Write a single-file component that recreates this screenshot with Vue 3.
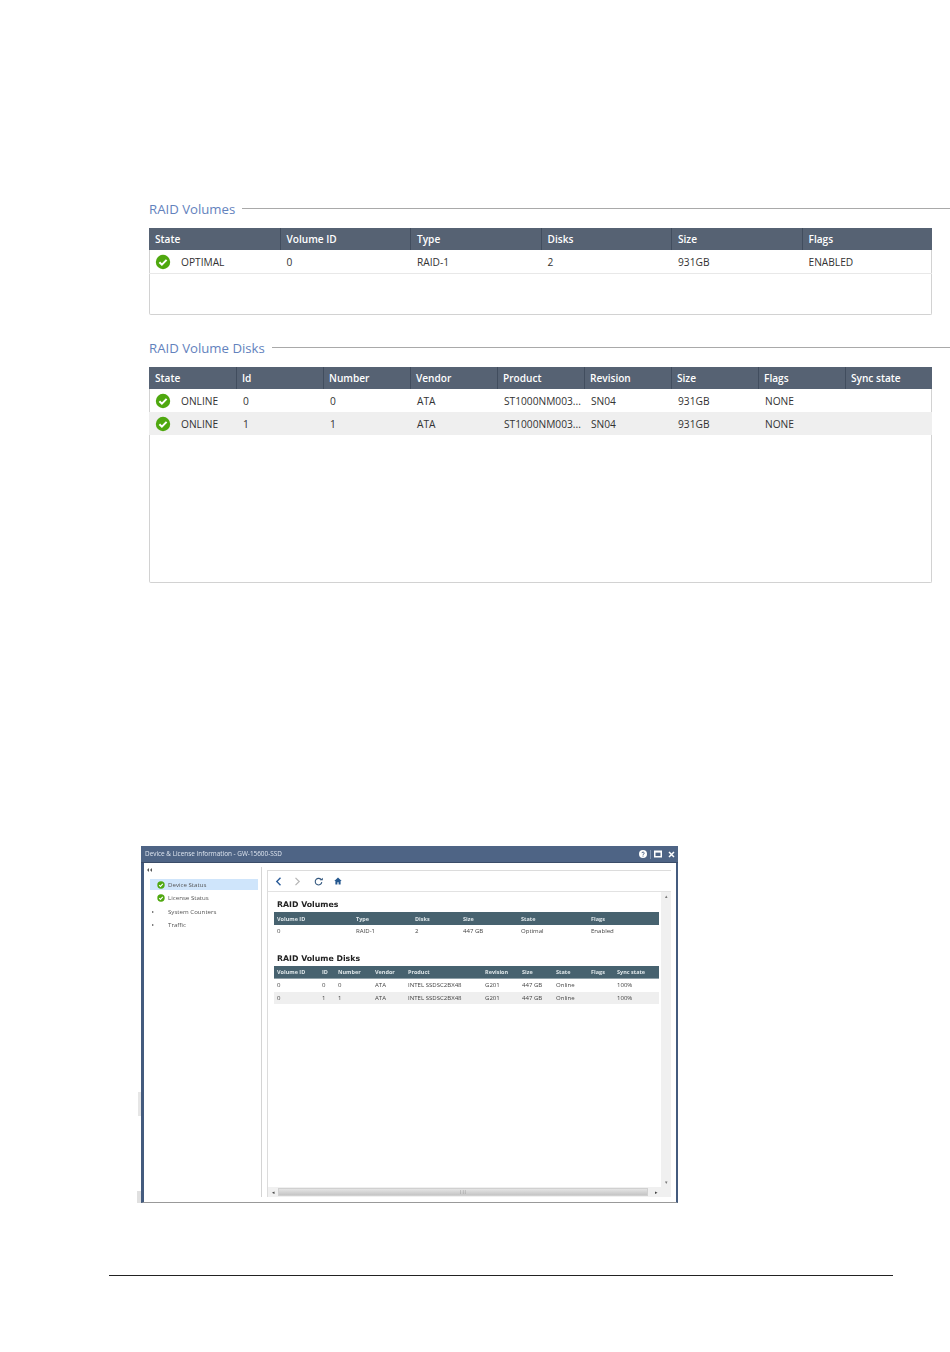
<script setup>
const volCols = ['State', 'Volume ID', 'Type', 'Disks', 'Size', 'Flags']
const volRow = ['0', 'RAID-1', '2', '931GB', 'ENABLED']
const diskCols = ['State', 'Id', 'Number', 'Vendor', 'Product', 'Revision', 'Size', 'Flags', 'Sync state']
const diskRows = [
  ['0', '0', 'ATA', 'ST1000NM003...', 'SN04', '931GB', 'NONE', ''],
  ['1', '1', 'ATA', 'ST1000NM003...', 'SN04', '931GB', 'NONE', '']
]
const navItems = [
  { label: 'Device Status', icon: true, active: true },
  { label: 'License Status', icon: true },
  { label: 'System Counters' },
  { label: 'Traffic' }
]
const innerVolCols = [
  ['Volume ID', 79], ['Type', 59], ['Disks', 48], ['Size', 58], ['State', 70], ['Flags', 68]
]
const innerVolRow = ['0', 'RAID-1', '2', '447 GB', 'Optimal', 'Enabled']
const innerDiskCols = [
  ['Volume ID', 45], ['ID', 16], ['Number', 37], ['Vendor', 33], ['Product', 77], ['Revision', 37],
  ['Size', 34], ['State', 35], ['Flags', 26], ['Sync state', 42]
]
const innerDiskRows = [
  ['0', '0', '0', 'ATA', 'INTEL SSDSC2BX48', 'G201', '447 GB', 'Online', '', '100%'],
  ['0', '1', '1', 'ATA', 'INTEL SSDSC2BX48', 'G201', '447 GB', 'Online', '', '100%']
]
</script>

<template>
  <div class="page">
    <section class="group first">
      <div class="legend"><h2>RAID Volumes</h2><span class="rule"></span></div>
      <div class="panel vol-panel">
        <div class="grid head cols6">
          <div v-for="c in volCols" :key="c" class="hcell">{{ c }}</div>
        </div>
        <div class="grid row lined cols6">
          <div class="cell state">
            <svg class="ok" viewBox="0 0 16 16"><circle cx="8" cy="8" r="7.2" fill="#4fa80f"/><path d="M4.4 8.2l2.5 2.5 4.7-4.8" fill="none" stroke="#fff" stroke-width="2"/></svg>
            <span>OPTIMAL</span>
          </div>
          <div v-for="(v, i) in volRow" :key="i" class="cell">{{ v }}</div>
        </div>
      </div>
    </section>

    <section class="group second">
      <div class="legend"><h2>RAID Volume Disks</h2><span class="rule"></span></div>
      <div class="panel disk-panel">
        <div class="grid head cols9">
          <div v-for="c in diskCols" :key="c" class="hcell">{{ c }}</div>
        </div>
        <div v-for="(r, ri) in diskRows" :key="ri" class="grid row cols9" :class="{ alt: ri === 1 }">
          <div class="cell state">
            <svg class="ok" viewBox="0 0 16 16"><circle cx="8" cy="8" r="7.2" fill="#4fa80f"/><path d="M4.4 8.2l2.5 2.5 4.7-4.8" fill="none" stroke="#fff" stroke-width="2"/></svg>
            <span>ONLINE</span>
          </div>
          <div v-for="(v, i) in r" :key="i" class="cell">{{ v }}</div>
        </div>
      </div>
    </section>

    <div class="window">
      <span class="scrap scrap-a"></span>
      <span class="scrap scrap-b"></span>
      <header class="titlebar">
        <span class="wintitle">Device &amp; License Information - GW-15600-SSD</span>
        <span class="winbtns">
          <svg width="8" height="8" viewBox="0 0 8 8"><circle cx="4" cy="4" r="4" fill="#fff"/><path d="M2.8 3.1c.1-1.3 2.5-1.3 2.4.1 0 .9-1.1.9-1.2 1.7M4 5.6v1" fill="none" stroke="#4e6485" stroke-width="1"/></svg>
          <i class="sep"></i>
          <svg width="8" height="8" viewBox="0 0 8 8"><rect x=".75" y="1.25" width="6.5" height="5.5" fill="none" stroke="#fff" stroke-width="1.5"/><rect x=".5" y="1" width="7" height="1.6" fill="#fff"/></svg>
          <svg class="close" width="7" height="7" viewBox="0 0 7 7"><path d="M1 1l5 5M6 1l-5 5" stroke="#fff" stroke-width="1.5"/></svg>
        </span>
      </header>
      <div class="winbody">
        <aside class="sidebar">
          <svg class="collapse" width="5" height="4" viewBox="0 0 5 4"><path d="M2 0v4L0 2zM5 0v4L3 2z" fill="#555"/></svg>
          <div v-for="n in navItems" :key="n.label" class="nav" :class="{ active: n.active }">
            <svg v-if="n.icon" class="navicon" viewBox="0 0 16 16"><circle cx="8" cy="8" r="7.4" fill="#4fa80f"/><path d="M4.4 8.2l2.5 2.5 4.7-4.8" fill="none" stroke="#fff" stroke-width="2.2"/></svg>
            <span v-else class="arrow">▸</span>
            <span>{{ n.label }}</span>
          </div>
        </aside>
        <div class="divider"></div>
        <main class="content">
          <div class="toolbar">
            <svg width="7" height="9" viewBox="0 0 7 9"><path d="M5.5 .8L1.8 4.5l3.7 3.7" fill="none" stroke="#2b5c99" stroke-width="1.4"/></svg>
            <svg class="next" width="7" height="9" viewBox="0 0 7 9"><path d="M1.5 .8l3.7 3.7-3.7 3.7" fill="none" stroke="#b5b5b5" stroke-width="1.2"/></svg>
            <svg class="reload" width="9" height="9" viewBox="0 0 9 9"><path d="M7.4 3A3.3 3.3 0 1 0 7.8 5.2" fill="none" stroke="#34587f" stroke-width="1.1"/><path d="M6 3.2h2.8V.8z" fill="#34587f"/></svg>
            <svg class="home" width="8" height="8" viewBox="0 0 8 8"><path d="M4 .5L.3 4h1.1v3.5h2V5.2h1.2v2.3h2V4h1.1z" fill="#25588f"/></svg>
          </div>
          <div class="scrollwrap">
            <div class="inner">
              <h3 class="t1">RAID Volumes</h3>
              <div class="ihead">
                <span v-for="c in innerVolCols" :key="c[0]" :style="{ width: c[1] + 'px' }">{{ c[0] }}</span>
              </div>
              <div class="irow first-row">
                <span v-for="(v, i) in innerVolRow" :key="i" :style="{ width: innerVolCols[i][1] + 'px' }">{{ v }}</span>
              </div>
              <h3 class="t2">RAID Volume Disks</h3>
              <div class="ihead h2">
                <span v-for="c in innerDiskCols" :key="c[0]" :style="{ width: c[1] + 'px' }">{{ c[0] }}</span>
              </div>
              <div v-for="(r, ri) in innerDiskRows" :key="ri" class="irow" :class="{ ialt: ri === 1 }">
                <span v-for="(v, i) in r" :key="i" :style="{ width: innerDiskCols[i][1] + 'px' }">{{ v }}</span>
              </div>
            </div>
            <div class="vscroll"><span>▴</span><span>▾</span></div>
          </div>
          <div class="hscroll">
            <span class="hbtn">◂</span>
            <div class="thumb"><span>|||</span></div>
            <span class="hbtn">▸</span>
          </div>
        </main>
      </div>
    </div>

    <div class="footer-line"></div>
  </div>
</template>

<style scoped>
.page {
  width: 950px;
  height: 1352px;
  overflow: hidden;
  background: #fff;
  font-family: "Open Sans", "Noto Sans", "Liberation Sans", sans-serif;
  color: #333;
  padding-top: 201px;
  box-sizing: border-box;
}
.group { margin-left: 149px; }
.second { margin-top: 25px; }
.legend { display: flex; align-items: center; height: 16px; gap: 7px; margin-bottom: 11px; }
.legend h2 {
  margin: 0;
  font-size: 13.2px;
  line-height: 16px;
  font-weight: 400;
  color: #6382bd;
  white-space: nowrap;
}
.rule { flex: 1; height: 1px; background: #a9a9a9; margin-top: -2px; }
.panel {
  width: 783px;
  box-sizing: border-box;
  border: 1px solid #d2d2d2;
  border-top: 0;
  border-radius: 0 0 2px 2px;
}
.vol-panel { height: 87px; }
.disk-panel { height: 216px; }
.grid { display: grid; margin: 0 -1px; }
.cols6 { grid-template-columns: repeat(6, 1fr); }
.cols9 { grid-template-columns: repeat(9, 1fr); }
.head { background: #566273; height: 22px; }
.hcell {
  color: #fff;
  font-size: 10.1px;
  line-height: 22px;
  font-weight: 600;
  padding-left: 6px;
  border-left: 1px solid #414d5e;
}
.hcell:first-child { border-left: 0; }
.cols9 .hcell:not(:first-child) { padding-left: 5px; }
.row { height: 23px; align-items: center; }
.lined { border-bottom: 1px solid #e8e8e8; }
.alt { background: #efefef; }
.cell {
  font-size: 10.2px;
  color: #333;
  padding-left: 7px;
  white-space: nowrap;
}
.state { display: flex; align-items: center; padding-left: 6px; gap: 10px; }
.ok { width: 16px; height: 16px; flex: none; }

.window {
  position: relative;
  margin: 263px 0 0 141px;
  width: 537px;
  height: 357px;
  box-sizing: border-box;
  background: #fff;
  border-left: 3px solid #445b7e;
  border-right: 2px solid #445b7e;
  border-bottom: 1px solid #999;
  display: flex;
  flex-direction: column;
  filter: blur(0.3px);
}
.scrap { position: absolute; left: -6px; width: 3px; background: #dcdcdc; }
.scrap-a { top: 246px; height: 24px; background: #e6e6e6; }
.scrap-b { bottom: -1px; height: 12px; width: 4px; left: -7px; background: #e0e0e0; }
.titlebar {
  height: 16px;
  margin: 0 -2px 0 -3px;
  background: #4e6485;
  border-bottom: 1px solid #3a4c68;
  color: #dfe6f0;
  font-size: 6.4px;
  line-height: 16px;
  display: flex;
  justify-content: space-between;
  padding: 0 3px 0 4px;
  flex: none;
}
.winbtns { display: flex; align-items: center; gap: 3px; }
.sep { width: 1px; height: 9px; background: #8093af; }
.close { margin-left: 3px; }
.winbody { flex: 1; display: flex; min-height: 0; }
.sidebar { width: 117px; flex: none; padding: 5px 0 0 6px; box-sizing: border-box; }
.collapse { display: block; margin-left: -3px; margin-bottom: 7px; }
.nav {
  height: 11px;
  width: 108px;
  margin-bottom: 2.33px;
  display: flex;
  align-items: center;
  font-size: 6.15px;
  color: #555;
  padding-left: 7px;
  box-sizing: border-box;
}
.nav.active { background: #cfe5fb; }
.navicon { width: 8px; height: 8px; margin-right: 3px; flex: none; }
.arrow { width: 11px; flex: none; font-size: 4px; margin-left: -5px; margin-right: 5px; color: #555; }
.divider { width: 1px; margin: 4px 5px 5px 0; background: #d4d4d4; flex: none; }
.content {
  width: 404px;
  flex: none;
  margin-top: 7px;
  margin-bottom: 5px;
  border: 1px solid #dcdcdc;
  border-bottom: 0;
  border-right: 0;
  display: flex;
  flex-direction: column;
  min-height: 0;
  box-sizing: border-box;
}
.toolbar {
  height: 20px;
  flex: none;
  border-bottom: 1px solid #e2e2e2;
  display: flex;
  align-items: center;
  padding-left: 7px;
}
.next { margin-left: 12px; }
.reload { margin-left: 13px; }
.home { margin-left: 11px; }
.scrollwrap { flex: 1; display: flex; min-height: 0; }
.inner { flex: 1; padding: 0 2px 0 6px; min-width: 0; }
.t1, .t2 {
  margin: 0;
  font-family: "DejaVu Sans", sans-serif;
  font-size: 7.8px;
  font-weight: 700;
  color: #222;
  padding-left: 3px;
}
.t1 { line-height: 10px; margin-top: 8px; margin-bottom: 2px; }
.t2 { line-height: 10px; margin-top: 17px; margin-bottom: 2px; }
.ihead {
  height: 13px;
  background: #47626f;
  display: flex;
  align-items: center;
  color: #dfe7ea;
  font-size: 5.5px;
  font-weight: 700;
  padding-left: 3px;
}
.h2 { height: 12px; border-bottom: 1px solid #8fa0a8; }
.irow {
  height: 12.5px;
  display: flex;
  align-items: center;
  font-size: 6.05px;
  color: #444;
  padding-left: 3px;
}
.first-row { height: 12px; }
.ialt { background: #efefef; }
.ihead span, .irow span { flex: none; white-space: nowrap; overflow: hidden; }
.vscroll {
  width: 10px;
  flex: none;
  background: #f0f0f0;
  display: flex;
  flex-direction: column;
  justify-content: space-between;
  align-items: center;
  font-size: 5px;
  line-height: 8px;
  color: #777;
  padding: 0 0 1px;
}
.hscroll {
  height: 10px;
  flex: none;
  background: #f0f0f0;
  display: flex;
  align-items: center;
  font-size: 5px;
  color: #444;
}
.hbtn { width: 10px; text-align: center; flex: none; }
.thumb {
  width: 370px;
  height: 8px;
  background: linear-gradient(#e4e4e4, #c5c5c5);
  border: 1px solid #d0d0d0;
  box-sizing: border-box;
  text-align: center;
  line-height: 6px;
  font-size: 4px;
  color: #777;
  margin-right: 3px;
}
.footer-line {
  width: 784px;
  height: 1px;
  background: #222;
  margin: 72px 0 0 109px;
}
</style>
